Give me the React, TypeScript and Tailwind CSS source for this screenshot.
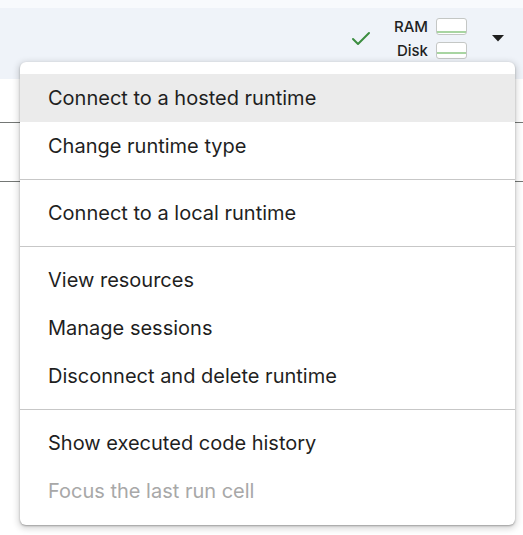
import { Check } from 'lucide-react';

type Entry = { label: string; disabled?: boolean; active?: boolean } | 'sep';

const entries: Entry[] = [
  { label: 'Connect to a hosted runtime', active: true },
  { label: 'Change runtime type' },
  'sep',
  { label: 'Connect to a local runtime' },
  'sep',
  { label: 'View resources' },
  { label: 'Manage sessions' },
  { label: 'Disconnect and delete runtime' },
  'sep',
  { label: 'Show executed code history' },
  { label: 'Focus the last run cell', disabled: true },
];

function Meter({ fill }: { fill: 'bottom' | 'middle' }) {
  return (
    <div className="relative w-[31px] h-[17px] rounded-[3px] border border-[#c4c7c5] bg-white">
      <div
        className={`absolute left-0 right-0 h-[2px] bg-[#a8d5a2] ${
          fill === 'bottom' ? 'bottom-[1px]' : 'top-[9px]'
        }`}
      />
    </div>
  );
}

export default function App() {
  return (
    <div className="relative w-[523px] h-[535px] overflow-hidden bg-white font-['Inter',sans-serif]">
      <div className="h-[8px] bg-[#f8fafd]" />
      <header className="h-[71px] bg-[#eff3f9] flex items-center justify-end pr-[19px] pb-[11px]">
        <Check className="w-[24px] h-[24px] text-[#3c8d40] mr-[21px] mt-[2px]" strokeWidth={2} />
        <div className="flex flex-col gap-[7px] items-end text-[15px] leading-[17px] font-medium text-[#1f1f1f]">
          <div className="flex items-center gap-[8px]">
            <span>RAM</span>
            <Meter fill="bottom" />
          </div>
          <div className="flex items-center gap-[8px]">
            <span>Disk</span>
            <Meter fill="middle" />
          </div>
        </div>
        <svg className="ml-[25px]" width="12" height="7" viewBox="0 0 12 7">
          <path d="M0 0h12L6 6.5z" fill="#1f1f1f" />
        </svg>
      </header>
      <div className="h-[43px]" />
      <div className="h-px bg-[#747775]" />
      <div className="h-[58px]" />
      <div className="h-px bg-[#747775]" />

      <div className="absolute left-[20px] top-[62px] w-[495px] rounded-[6px] bg-white pt-[12px] pb-[10px] shadow-[0_2px_6px_2px_rgba(0,0,0,0.15),0_1px_2px_rgba(0,0,0,0.3)]">
        {entries.map((e, i) =>
          e === 'sep' ? (
            <div key={i} className="py-[9px]">
              <div className="h-px bg-[#c7c7c7]" />
            </div>
          ) : (
            <div
              key={i}
              className={`h-[48px] flex items-center pl-[28px] text-[20px] ${
                e.active ? 'bg-[#ebebeb]' : ''
              } ${e.disabled ? 'text-[#a8a8a8]' : 'text-[#1f1f1f]'}`}
            >
              {e.label}
            </div>
          )
        )}
      </div>
    </div>
  );
}
